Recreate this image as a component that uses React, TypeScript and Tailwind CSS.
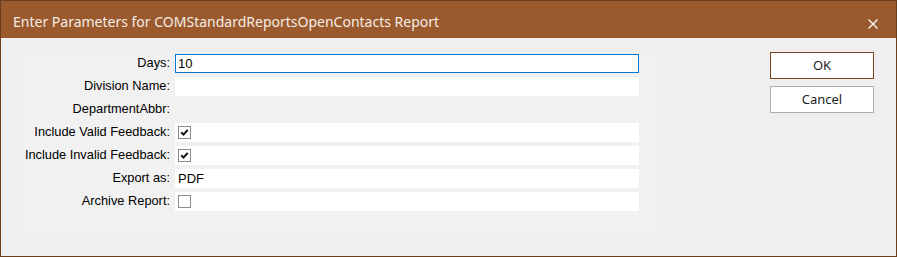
import React from "react";

const Check = ({ checked }: { checked: boolean }) => (
  <div className="ml-[3px] w-[13px] h-[13px] border border-[#8a8a8a] bg-white flex items-center justify-center">
    {checked && (
      <svg width="9" height="9" viewBox="0 0 9 9">
        <path d="M1.3 4.3 L3.5 6.6 L7.7 1.8" stroke="#111" strokeWidth="2" fill="none" />
      </svg>
    )}
  </div>
);

type Row = { label: string; kind: "input" | "text" | "none" | "check"; value?: string; checked?: boolean; focus?: boolean };

const rows: Row[] = [
  { label: "Days:", kind: "input", value: "10", focus: true },
  { label: "Division Name:", kind: "text", value: "" },
  { label: "DepartmentAbbr:", kind: "none" },
  { label: "Include Valid Feedback:", kind: "check", checked: true },
  { label: "Include Invalid Feedback:", kind: "check", checked: true },
  { label: "Export as:", kind: "text", value: "PDF" },
  { label: "Archive Report:", kind: "check", checked: false },
];

export default function App() {
  return (
    <div className="w-[897px] h-[257px] border border-[#6b3d1d] bg-[#efefef] flex flex-col overflow-hidden">
      <div className="h-[37px] shrink-0 bg-[#9a5a2e] flex items-start justify-between pl-[12px] pr-[18px] pt-[13px]">
        <span className="text-[#f5ece4] text-[14px] font-['Noto_Sans',sans-serif] leading-[16px]">
          Enter Parameters for COMStandardReportsOpenContacts Report
        </span>
        <svg width="10" height="10" viewBox="0 0 10 10" className="mt-[5px]">
          <path d="M0.5 0.5 L9.5 9.5 M9.5 0.5 L0.5 9.5" stroke="#fff" strokeWidth="1.3" />
        </svg>
      </div>
      <div className="flex items-start">
        <div className="ml-[21px] mt-[13px] bg-[#f1f1f1] pt-[3px] pb-[21px] pr-[23px] grid grid-cols-[149px_464px] gap-x-[4px] gap-y-[4px] font-['Liberation_Sans',Arial,sans-serif] text-[12.8px] text-[#000]">
          {rows.map((r) => (
            <React.Fragment key={r.label}>
              <div className="h-[19px] flex items-center justify-end pr-[1px] leading-none">{r.label}</div>
              {r.kind === "none" ? (
                <div className="h-[19px]" />
              ) : r.kind === "check" ? (
                <div className="h-[19px] bg-white flex items-center">
                  <Check checked={!!r.checked} />
                </div>
              ) : (
                <div
                  className={
                    "h-[19px] bg-white flex items-center pl-[2px] text-[13px] leading-none " +
                    (r.focus ? "border border-[#0078d7]" : "")
                  }
                >
                  <span className={r.focus ? "" : "pl-[1px]"}>{r.value}</span>
                </div>
              )}
            </React.Fragment>
          ))}
        </div>
        <div className="ml-[108px] mt-[14px] flex flex-col gap-[7px] font-['Noto_Sans',sans-serif] text-[13px] text-[#222]">
          <button className="w-[104px] h-[27px] bg-white border border-[#7a4520] flex items-center justify-center leading-none">
            OK
          </button>
          <button className="w-[104px] h-[27px] bg-white border border-[#adadad] flex items-center justify-center leading-none">
            Cancel
          </button>
        </div>
      </div>
    </div>
  );
}
